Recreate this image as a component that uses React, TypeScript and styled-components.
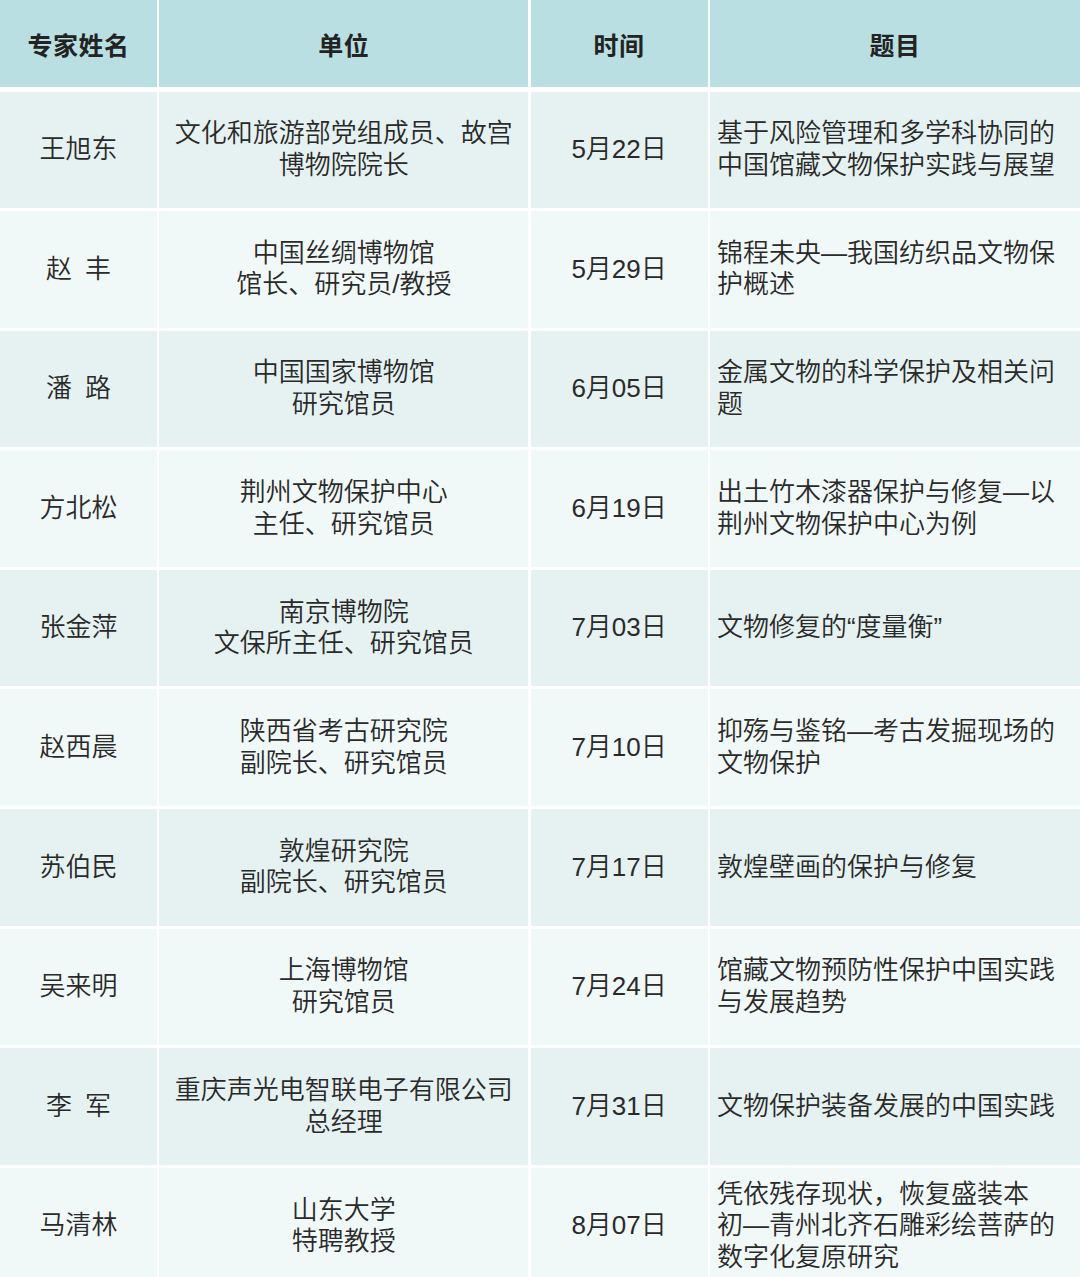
import React from "react";
import styled, { createGlobalStyle } from "styled-components";

const Global = createGlobalStyle`
  html, body { margin: 0; padding: 0; background: #ffffff; }
  body {
    font-family: "Liberation Sans", "Noto Sans CJK SC", sans-serif;
    color: #2e2e2e;
  }
`;

const Table = styled.div`
  width: 1080px;
  display: flex;
  flex-direction: column;
  gap: 3px;
  background: #ffffff;
`;

const Row = styled.div<{ $kind: "head" | "odd" | "even"; $h: number }>`
  display: grid;
  grid-template-columns: 157px 369px 177px 1fr;
  column-gap: 2.3px;
  height: ${(p) => p.$h}px;
  margin-bottom: ${(p) => (p.$kind === "head" ? 1.5 : 0)}px;
  & > div {
    background: ${(p) =>
      p.$kind === "head" ? "#b9dfe2" : p.$kind === "odd" ? "#e5f2f1" : "#f1f8f8"};
  }
`;

const HeadCell = styled.div`
  display: flex;
  align-items: center;
  justify-content: center;
  font-size: 25px;
  font-weight: 700;
  color: #232323;
  letter-spacing: 0.5px;
`;

const Cell = styled.div<{ $align?: "center" | "left" }>`
  display: flex;
  flex-direction: column;
  justify-content: center;
  align-items: ${(p) => (p.$align === "left" ? "flex-start" : "center")};
  text-align: ${(p) => (p.$align === "left" ? "left" : "center")};
  padding: ${(p) => (p.$align === "left" ? "0 0 0 7px" : "0")};
  font-size: 26px;
  font-weight: 350;
  line-height: 31.5px;
  color: #2a2a2a;
  white-space: nowrap;
`;

const Line = styled.span`
  display: block;
`;

type Item = { name: string; unit: string[]; date: string; title: string[] };

const data: Item[] = [
  { name: "王旭东", unit: ["文化和旅游部党组成员、故宫", "博物院院长"], date: "5月22日", title: ["基于风险管理和多学科协同的", "中国馆藏文物保护实践与展望"] },
  { name: "赵\u2002丰", unit: ["中国丝绸博物馆", "馆长、研究员/教授"], date: "5月29日", title: ["锦程未央—我国纺织品文物保", "护概述"] },
  { name: "潘\u2002路", unit: ["中国国家博物馆", "研究馆员"], date: "6月05日", title: ["金属文物的科学保护及相关问", "题"] },
  { name: "方北松", unit: ["荆州文物保护中心", "主任、研究馆员"], date: "6月19日", title: ["出土竹木漆器保护与修复—以", "荆州文物保护中心为例"] },
  { name: "张金萍", unit: ["南京博物院", "文保所主任、研究馆员"], date: "7月03日", title: ["文物修复的“度量衡”"] },
  { name: "赵西晨", unit: ["陕西省考古研究院", "副院长、研究馆员"], date: "7月10日", title: ["抑殇与鉴铭—考古发掘现场的", "文物保护"] },
  { name: "苏伯民", unit: ["敦煌研究院", "副院长、研究馆员"], date: "7月17日", title: ["敦煌壁画的保护与修复"] },
  { name: "吴来明", unit: ["上海博物馆", "研究馆员"], date: "7月24日", title: ["馆藏文物预防性保护中国实践", "与发展趋势"] },
  { name: "李\u2002军", unit: ["重庆声光电智联电子有限公司", "总经理"], date: "7月31日", title: ["文物保护装备发展的中国实践"] },
  { name: "马清林", unit: ["山东大学", "特聘教授"], date: "8月07日", title: ["凭依残存现状，恢复盛装本", "初—青州北齐石雕彩绘菩萨的", "数字化复原研究"] },
];

export default function App() {
  return (
    <>
      <Global />
      <Table>
        <Row $kind="head" $h={87}>
          <HeadCell>专家姓名</HeadCell>
          <HeadCell>单位</HeadCell>
          <HeadCell>时间</HeadCell>
          <HeadCell>题目</HeadCell>
        </Row>
        {data.map((d, i) => (
          <Row key={i} $kind={i % 2 === 0 ? "odd" : "even"} $h={116.6}>
            <Cell>{d.name}</Cell>
            <Cell>
              {d.unit.map((l, j) => (
                <Line key={j}>{l}</Line>
              ))}
            </Cell>
            <Cell>{d.date}</Cell>
            <Cell $align="left">
              {d.title.map((l, j) => (
                <Line key={j}>{l}</Line>
              ))}
            </Cell>
          </Row>
        ))}
      </Table>
    </>
  );
}
